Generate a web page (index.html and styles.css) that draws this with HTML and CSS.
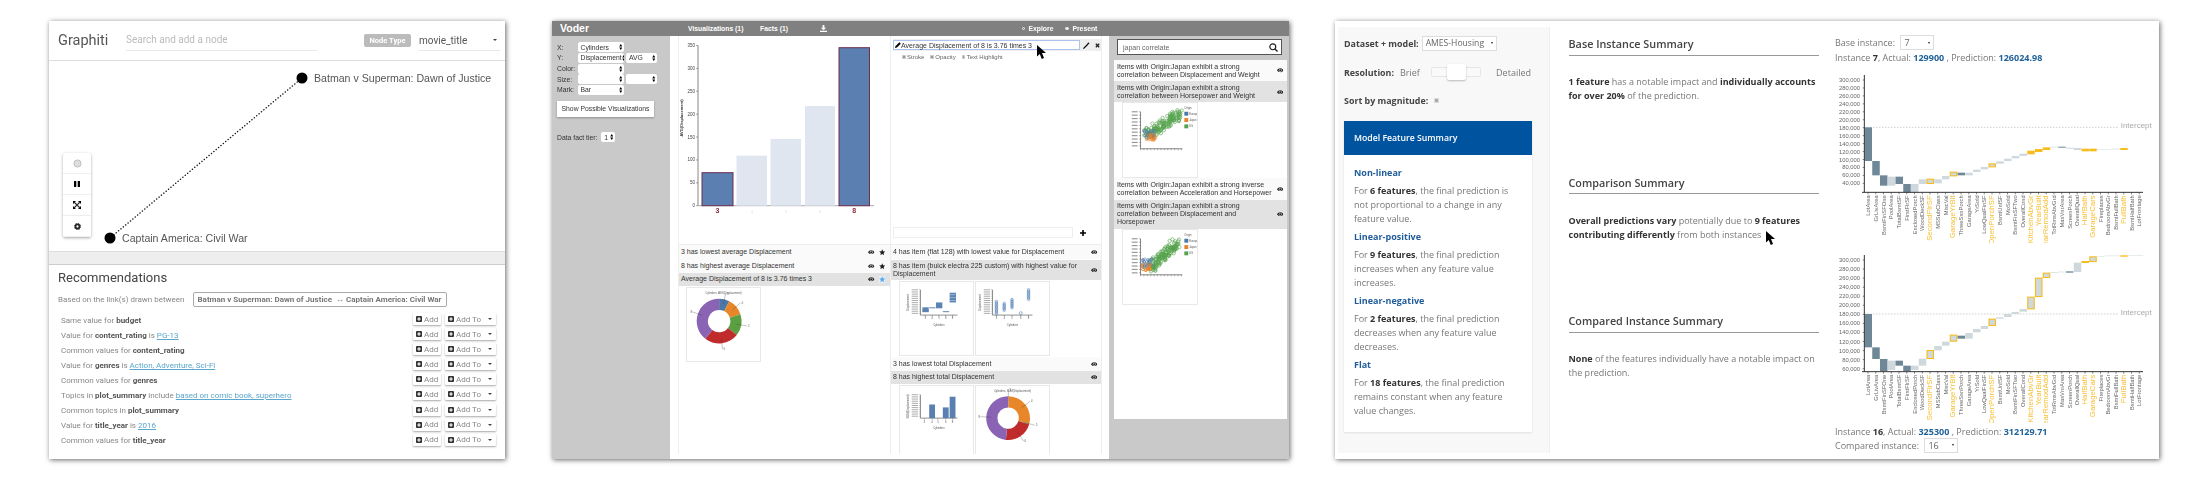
FILE: index.html
```html
<!DOCTYPE html>
<html lang="en">
<head>
    <meta charset="UTF-8">
    <title>Visual analytics systems</title>
    <link rel="stylesheet" href="styles.css">
</head>
<body>
<svg class="sprite">
    <defs>
        <symbol id="eye" viewBox="0 0 16 10"><path fill-rule="evenodd" d="M8 0C4.300 0 1.600 2.300 0 5c1.600 2.700 4.300 5 8 5s6.400-2.300 8-5c-1.600-2.700-4.300-5-8-5zm0 1.200a3.800 3.800 0 1 1 0 7.600 3.800 3.800 0 0 1 0-7.600z"/><circle cx="8" cy="5" r="2.600"/></symbol>
        <symbol id="star" viewBox="0 0 20 20"><polygon points="10,1 12.600,7.200 19.500,7.800 14.300,12.200 15.900,19 10,15.400 4.100,19 5.700,12.200 .5,7.800 7.400,7.200"/></symbol>
        <symbol id="plus-box" viewBox="0 0 10 10"><path fill-rule="evenodd" d="M1.500 0h7A1.500 1.500 0 0 1 10 1.500v7A1.500 1.500 0 0 1 8.500 10h-7A1.500 1.500 0 0 1 0 8.500v-7A1.500 1.500 0 0 1 1.500 0zM4 2v2H2v2h2v2h2V6h2V4H6V2z"/></symbol>
        <symbol id="updown" viewBox="0 0 6 10"><path d="M3 0l2.600 4H.4zM3 10L.4 6h5.200z"/></symbol>
        <symbol id="cursor" viewBox="0 0 9 14"><path d="M0 0v11.500l2.800-2.600L4.800 14l2.200-.9-2-5h4z"/></symbol>
    </defs>
</svg>

<div class="shot">

    <section class="panel graphiti">
        <header class="g-head">
            <div class="g-brand">Graphiti</div>
            <div class="g-search">Search and add a node</div>
            <div class="g-badge">Node Type</div>
            <div class="g-select">movie_title<i class="caret"></i></div>
        </header>
        <div class="g-graph">
            <svg class="g-canvas" width="456" height="193">
                <line class="g-link" x1="253" y1="18" x2="61" y2="178"/>
                <circle cx="253" cy="18" r="5.500"/>
                <circle cx="61" cy="178" r="5.500"/>
                <text x="265" y="22">Batman v Superman: Dawn of Justice</text>
                <text x="73" y="182">Captain America: Civil War</text>
            </svg>
            <div class="g-tools">
                <div class="g-tool">
                    <svg width="9" height="9" viewBox="0 0 10 10"><circle cx="5" cy="5" r="4" fill="#ddd" stroke="#bbb"/></svg>
                </div>
                <div class="g-tool">
                    <svg width="8" height="8" viewBox="0 0 8 8"><path d="M1 1h2.300v6H1zM4.700 1H7v6H4.700z"/></svg>
                </div>
                <div class="g-tool">
                    <svg width="8" height="8" viewBox="0 0 8 8"><path d="M0 0h3L0 3zM8 0v3L5 0zM0 8V5l3 3zM8 8H5l3-3z"/><path d="M1 1l6 6M7 1L1 7" stroke="#333" stroke-width="1.200"/></svg>
                </div>
                <div class="g-tool">
                    <svg width="7" height="7" viewBox="0 0 8 8"><circle cx="4" cy="4" r="2.300" fill="none" stroke="#222" stroke-width="2"/><circle cx="4" cy="4" r="3.700" fill="none" stroke="#222" stroke-width="1" stroke-dasharray="1.500 1.400"/></svg>
                </div>
            </div>
        </div>
        <div class="g-divider"></div>
        <div class="g-recs">
            <h3>Recommendations</h3>
            <div class="g-based">
                <span>Based on the link(s) drawn between</span>
                <b class="g-pair">Batman v Superman: Dawn of Justice &nbsp;↔ Captain America: Civil War</b>
            </div>
            <ul class="g-list">
                <li><span>Same value for <b>budget</b></span><span class="g-btns"><span class="g-btn add"><svg><use href="#plus-box"/></svg>Add</span><span class="g-btn addto"><svg><use href="#plus-box"/></svg>Add To<i class="caret"></i></span></span></li>
                <li><span>Value for <b>content_rating</b> is <a>PG-13</a></span><span class="g-btns"><span class="g-btn add"><svg><use href="#plus-box"/></svg>Add</span><span class="g-btn addto"><svg><use href="#plus-box"/></svg>Add To<i class="caret"></i></span></span></li>
                <li><span>Common values for <b>content_rating</b></span><span class="g-btns"><span class="g-btn add"><svg><use href="#plus-box"/></svg>Add</span><span class="g-btn addto"><svg><use href="#plus-box"/></svg>Add To<i class="caret"></i></span></span></li>
                <li><span>Value for <b>genres</b> is <a>Action, Adventure, Sci-Fi</a></span><span class="g-btns"><span class="g-btn add"><svg><use href="#plus-box"/></svg>Add</span><span class="g-btn addto"><svg><use href="#plus-box"/></svg>Add To<i class="caret"></i></span></span></li>
                <li><span>Common values for <b>genres</b></span><span class="g-btns"><span class="g-btn add"><svg><use href="#plus-box"/></svg>Add</span><span class="g-btn addto"><svg><use href="#plus-box"/></svg>Add To<i class="caret"></i></span></span></li>
                <li><span>Topics in <b>plot_summary</b> include <a>based on comic book, superhero</a></span><span class="g-btns"><span class="g-btn add"><svg><use href="#plus-box"/></svg>Add</span><span class="g-btn addto"><svg><use href="#plus-box"/></svg>Add To<i class="caret"></i></span></span></li>
                <li><span>Common topics in <b>plot_summary</b></span><span class="g-btns"><span class="g-btn add"><svg><use href="#plus-box"/></svg>Add</span><span class="g-btn addto"><svg><use href="#plus-box"/></svg>Add To<i class="caret"></i></span></span></li>
                <li><span>Value for <b>title_year</b> is <a>2016</a></span><span class="g-btns"><span class="g-btn add"><svg><use href="#plus-box"/></svg>Add</span><span class="g-btn addto"><svg><use href="#plus-box"/></svg>Add To<i class="caret"></i></span></span></li>
                <li><span>Common values for <b>title_year</b></span><span class="g-btns"><span class="g-btn add"><svg><use href="#plus-box"/></svg>Add</span><span class="g-btn addto"><svg><use href="#plus-box"/></svg>Add To<i class="caret"></i></span></span></li>
            </ul>
        </div>
    </section>

    <section class="panel voder">
        <header class="v-head">
            <b class="v-brand">Voder</b>
            <b class="v-tab tab-vis">Visualizations (1)</b>
            <b class="v-tab tab-facts">Facts (1)</b>
            <svg class="v-save" width="7" height="7" viewBox="0 0 8 8"><path d="M3 0h2v3h2L4 6 1 3h2zM0 6.500h8V8H0z" fill="#fff"/></svg>
            <i class="v-radio"></i><b class="v-tab">Explore</b>
            <i class="v-radio on"></i><b class="v-tab">Present</b>
        </header>
        <div class="v-body">
            <aside class="v-side">
                <div class="v-field"><label>X:</label><div class="v-pick wide">Cylinders<svg><use href="#updown"/></svg></div></div>
                <div class="v-field"><label>Y:</label><div class="v-pick wide">Displacement<svg><use href="#updown"/></svg></div><div class="v-pick narrow">AVG<svg><use href="#updown"/></svg></div></div>
                <div class="v-field"><label>Color:</label><div class="v-pick wide"><svg><use href="#updown"/></svg></div></div>
                <div class="v-field"><label>Size:</label><div class="v-pick wide"><svg><use href="#updown"/></svg></div><div class="v-pick narrow"><svg><use href="#updown"/></svg></div></div>
                <div class="v-field"><label>Mark:</label><div class="v-pick wide">Bar<svg><use href="#updown"/></svg></div></div>
                <div class="v-show">Show Possible Visualizations</div>
                <div class="v-tier">Data fact tier: <div class="v-pick tiny">1<svg><use href="#updown"/></svg></div></div>
            </aside>

            <div class="v-stage">
                <div class="v-chart">
                    <svg id="mainBars" width="211" height="209"></svg>
                </div>
                <div class="v-editor">
                    <div class="v-edit">
                        <div class="v-input">
                            <svg width="6" height="6" viewBox="0 0 8 8"><path d="M0 8l.6-2.500L5.800.3l1.900 1.900L2.500 7.400z"/></svg>Average Displacement of 8 is 3.76 times 3
                        </div>
                        <svg class="v-wand" width="7" height="7" viewBox="0 0 8 8"><path d="M0 7l5-5 1 1-5 5zM6 0l.5 1L8 1.500 6.500 2 6 3l-.5-1L4.500 1.500 5.500 1z"/></svg>
                        <svg class="v-close" width="5" height="5" viewBox="0 0 6 6"><path d="M1 1l4 4M5 1L1 5" stroke="#222" stroke-width="1.600"/></svg>
                    </div>
                    <div class="v-checks">
                        <span><i class="v-check"></i>Stroke</span>
                        <span><i class="v-check"></i>Opacity</span>
                        <span><i class="v-check"></i>Text Highlight</span>
                    </div>
                    <div class="v-note">
                        <div class="v-note-input"></div>
                        <svg width="6" height="6" viewBox="0 0 6 6"><path d="M2.200 0h1.600v2.200H6v1.600H3.800V6H2.200V3.800H0V2.200h2.200z"/></svg>
                    </div>
                </div>

                <div class="v-facts">
                    <div class="v-fact h14"><span>3 has lowest average Displacement</span><svg class="eye"><use href="#eye"/></svg><svg class="star"><use href="#star"/></svg></div>
                    <div class="v-fact h14"><span>8 has highest average Displacement</span><svg class="eye"><use href="#eye"/></svg><svg class="star"><use href="#star"/></svg></div>
                    <div class="v-fact h13 sel"><span>Average Displacement of 8 is 3.76 times 3</span><svg class="eye"><use href="#eye"/></svg><svg class="star blue"><use href="#star"/></svg></div>
                    <div class="v-thumbs first">
                        <svg class="v-thumb" id="donutAvg" viewBox="0 0 75 75"></svg>
                    </div>
                </div>

                <div class="v-facts right">
                    <div class="v-fact h14"><span>4 has item (flat 128) with lowest value for Displacement</span><svg class="eye"><use href="#eye"/></svg></div>
                    <div class="v-fact tall sel"><span>8 has item (buick electra 225 custom) with highest value for<br>Displacement</span><svg class="eye"><use href="#eye"/></svg></div>
                    <div class="v-thumbs">
                        <svg class="v-thumb" id="strips" viewBox="0 0 75 75"></svg>
                        <svg class="v-thumb" id="dots" viewBox="0 0 75 75"></svg>
                    </div>
                    <div class="v-fact h14"><span>3 has lowest total Displacement</span><svg class="eye"><use href="#eye"/></svg></div>
                    <div class="v-fact h13 sel"><span>8 has highest total Displacement</span><svg class="eye"><use href="#eye"/></svg></div>
                    <div class="v-thumbs">
                        <svg class="v-thumb" id="sumBars" viewBox="0 0 75 75"></svg>
                        <svg class="v-thumb" id="donutSum" viewBox="0 0 75 75"></svg>
                    </div>
                </div>
            </div>

            <aside class="v-search">
                <div class="v-query">japan correlate
                    <svg width="9" height="9" viewBox="0 0 10 10"><circle cx="4.200" cy="4.200" r="3.300" fill="none" stroke="#222" stroke-width="1.300"/><path d="M6.700 6.700L9.500 9.500" stroke="#222" stroke-width="1.600"/></svg>
                </div>
                <div class="v-results">
                    <div class="v-fact res"><span>Items with Origin:Japan exhibit a strong<br>correlation between Displacement and Weight</span><svg class="eye"><use href="#eye"/></svg></div>
                    <div class="v-fact res sel"><span>Items with Origin:Japan exhibit a strong<br>correlation between Horsepower and Weight</span><svg class="eye"><use href="#eye"/></svg></div>
                    <svg class="v-thumb res-thumb" id="scatterHp" viewBox="0 0 76 76"></svg>
                    <div class="v-fact res"><span>Items with Origin:Japan exhibit a strong inverse<br>correlation between Acceleration and Horsepower</span><svg class="eye"><use href="#eye"/></svg></div>
                    <div class="v-fact res sel"><span>Items with Origin:Japan exhibit a strong<br>correlation between Displacement and<br>Horsepower</span><svg class="eye"><use href="#eye"/></svg></div>
                    <svg class="v-thumb res-thumb" id="scatterDisp" viewBox="0 0 76 76"></svg>
                </div>
            </aside>
        </div>
        <svg class="cursor v-cursor"><use href="#cursor"/></svg>
    </section>

    <section class="panel ames">
        <aside class="a-side">
            <div class="a-line first">
                <b>Dataset + model:</b>
                <div class="a-select data">AMES-Housing<i class="a-arrow"></i></div>
            </div>
            <div class="a-line res">
                <b>Resolution:</b><span class="a-brief">Brief</span>
                <div class="a-slider"><div class="a-thumb"></div></div>
                <span class="a-detail">Detailed</span>
            </div>
            <div class="a-line sort">
                <b>Sort by magnitude:</b><i class="a-check"></i>
            </div>
            <div class="a-card">
                <h4>Model Feature Summary</h4>
                <div class="a-card-body">
                    <h5>Non-linear</h5>
                    <p>For <b>6 features</b>, the final prediction is not proportional to a change in any feature value.</p>
                    <h5>Linear-positive</h5>
                    <p>For <b>9 features</b>, the final prediction increases when any feature value increases.</p>
                    <h5>Linear-negative</h5>
                    <p>For <b>2 features</b>, the final prediction decreases when any feature value decreases.</p>
                    <h5>Flat</h5>
                    <p>For <b>18 features</b>, the final prediction remains constant when any feature value changes.</p>
                </div>
            </div>
        </aside>

        <div class="a-mid">
            <div class="a-sum">
                <h3>Base Instance Summary</h3>
                <p><b>1 feature</b> has a notable impact and <b>individually accounts for over 20%</b> of the prediction.</p>
            </div>
            <div class="a-sum">
                <h3>Comparison Summary</h3>
                <p><b>Overall predictions vary</b> potentially due to <b>9 features contributing differently</b> from both instances</p>
            </div>
            <div class="a-sum">
                <h3>Compared Instance Summary</h3>
                <p><b>None</b> of the features individually have a notable impact on the prediction.</p>
            </div>
        </div>

        <div class="a-charts">
            <div class="a-row pick-top">Base instance: <div class="a-select num">7<i class="a-arrow"></i></div></div>
            <div class="a-row">Instance <b>7</b>, Actual: <em>129900</em> , Prediction: <em>126024.98</em></div>
            <svg id="fallBase" class="a-fall" width="324" height="177"></svg>
            <svg id="fallComp" class="a-fall second" width="324" height="173"></svg>
            <div class="a-row">Instance <b>16</b>, Actual: <em>325300</em> , Prediction: <em>312129.71</em></div>
            <div class="a-row">Compared instance: <div class="a-select num">16<i class="a-arrow"></i></div></div>
        </div>
        <svg class="cursor a-cursor"><use href="#cursor"/></svg>
    </section>

</div>
<script src="charts.js"></script>
</body>
</html>
```
FILE: styles.css
```css
* { box-sizing: border-box; }
html, body { margin: 0; height: 480px; overflow: hidden; background: #fff; }
.sprite { display: none; }
.shot { display: flex; padding-top: 21px; filter: blur(.45px); }
.panel { position: relative; height: 438px; background: #fff; box-shadow: 1px 1px 5px rgba(0,0,0,.6); overflow: hidden; }
.cursor { position: absolute; width: 9px; height: 14px; }
i { display: block; }

/* graphiti */
.graphiti { width: 456px; margin-left: 49px; font-family: Roboto, sans-serif; color: #777; }
.g-head { display: flex; align-items: center; height: 40px; padding: 0 5px 0 9px; border-bottom: 1px solid #ddd; }
.g-brand { width: 68px; font-size: 14.500px; color: #555; }
.g-search { width: 191px; height: 21px; line-height: 20px; font-size: 10px; color: #bbb; border-bottom: 1px solid #e8e8e8; }
.g-badge { width: 47px; margin-left: 47px; line-height: 13px; text-align: center; font-size: 7.500px; font-weight: 700; color: #fff; background: #bbb; border-radius: 2px; }
.g-select { display: flex; align-items: center; justify-content: space-between; width: 81px; height: 21px; margin-left: 8px; padding-right: 3px; font-size: 10px; color: #555; border-bottom: 1px solid #e8e8e8; }
.caret { width: 0; height: 0; border: 2px solid transparent; border-top: 2.500px solid #444; border-bottom: 0; }
.g-graph { position: relative; height: 192px; border-bottom: 1px solid #ddd; }
.g-canvas { display: block; margin-top: -1px; }
.g-canvas text { font: 10.600px "Liberation Sans", sans-serif; fill: #555; }
.g-link { stroke: #111; stroke-width: 1.400; stroke-dasharray: .1 3; stroke-linecap: round; }
.g-tools { position: absolute; left: 14px; top: 93px; width: 28px; background: #fff; box-shadow: 0 1px 3px rgba(0,0,0,.35); border-radius: 2px; }
.g-tool { display: flex; align-items: center; justify-content: center; height: 21px; border-bottom: 1px solid #eee; }
.g-divider { height: 13px; background: #eee; border-bottom: 1px solid #ccc; }
.g-recs { padding: 0 9px; font-size: 8px; }
.g-recs h3 { margin: 0; font-size: 13px; font-weight: 400; line-height: 26px; color: #444; }
.g-based { display: flex; align-items: center; height: 15px; margin-top: 1px; color: #888; }
.g-pair { width: 254px; height: 15px; margin-left: 8px; line-height: 13px; text-align: center; color: #777; border: 1px solid #aaa; border-radius: 2px; }
.g-list { margin: 5.500px 0 0; padding: 0 0 0 3px; list-style: none; }
.g-list li { display: flex; justify-content: space-between; align-items: center; height: 15.080px; color: #888; }
.g-list b { color: #555; }
.g-list a { color: #5aa6cc; text-decoration: underline; }
.g-btns { display: flex; gap: 4px; margin-bottom: 2px; }
.g-btn { display: flex; align-items: center; height: 12px; padding-left: 3px; background: #fff; border-radius: 1px; box-shadow: 0 1px 2px rgba(0,0,0,.35); }
.g-btn svg { width: 6px; height: 6px; margin-right: 2px; fill: #333; }
.g-btn.add { width: 28px; }
.g-btn.addto { width: 51px; }
.g-btn .caret { margin-left: 7px; }

/* voder */
.voder { width: 737px; margin-left: 47px; font-family: "Liberation Sans", sans-serif; color: #333; }
.v-head { display: flex; align-items: center; height: 15px; padding-left: 8px; color: #fff; background: #808080; }
.v-brand { width: 128px; font-size: 10.500px; margin-top: -2px; }
.v-tab { font-size: 6.800px; }
.tab-vis { width: 72px; }
.tab-facts { width: 60px; }
.v-save { margin-right: 194.500px; }
.v-radio { width: 3.500px; height: 3.500px; margin-right: 3.500px; border: 1px solid #eee; border-radius: 50%; }
.v-radio.on { margin-left: 12px; background: #eee; }
.v-body { display: flex; height: 423px; }
.v-side { width: 118px; padding: 6px 5px; font-size: 6.800px; background: #c9c9c9; }
.v-field { display: flex; align-items: center; height: 10.670px; }
.v-field label { width: 20.500px; }
.v-pick { display: flex; align-items: center; height: 10px; padding: 0 2px 0 3px; background: #fff; border-radius: 2px; white-space: nowrap; overflow: hidden; }
.v-pick svg { flex: none; width: 3.500px; height: 6px; margin-left: auto; background: #fff; }
.v-pick.wide { width: 46.500px; }
.v-pick.narrow { width: 31px; margin-left: 2px; }
.v-pick.tiny { width: 14px; margin-left: 2px; }
.v-show { width: 97px; height: 16px; margin-top: 5.500px; line-height: 16px; text-align: center; background: #fff; box-shadow: 0 1px 2px rgba(0,0,0,.3); }
.v-tier { display: flex; align-items: center; height: 10px; margin-top: 15.500px; white-space: pre; }
.v-stage { display: grid; grid-template-columns: 212px 212px; grid-template-rows: 209px 209px; width: 439px; height: 418px; padding-left: 8px; overflow: hidden; font-size: 7px; }
.v-chart, .v-editor { border-bottom: 1px solid #eee; }
.v-chart { border-left: 1px solid #eee; }
.v-chart svg { display: block; font: 4.500px "Liberation Sans", sans-serif; }
.v-editor { display: flex; flex-direction: column; padding: 3px 0 6px 2px; border-left: 1px solid #eee; border-right: 1px solid #eee; }
.v-edit { display: flex; align-items: center; height: 12px; background: #eee; }
.v-input { display: flex; align-items: center; width: 187px; height: 10px; padding-left: 1px; background: #fff; border: 1px solid #a9c4ee; white-space: nowrap; }
.v-wand { margin-left: 2.500px; }
.v-close { margin-left: 5px; }
.v-checks { display: flex; gap: 6px; margin-top: 3px; padding-left: 9px; font-size: 6px; color: #666; }
.v-checks span { display: flex; align-items: center; }
.v-check { width: 3.500px; height: 3.500px; margin-right: 1.500px; background: #999; border: .5px solid #ccc; }
.v-note { display: flex; align-items: center; margin-top: auto; }
.v-note-input { width: 180px; height: 11px; margin-right: 7px; border: 1px solid #eee; }
.v-facts { border-left: 1px solid #eee; overflow: hidden; }
.v-facts.right { border-right: 1px solid #eee; }
.v-fact { display: flex; align-items: center; padding: 0 3px 0 2px; background: #fafafa; line-height: 8.100px; }
.v-fact span { flex: 1; white-space: nowrap; }
.v-fact.h14 { height: 14px; }
.v-fact.h13 { height: 13px; }
.v-fact.tall { height: 20.500px; margin-top: .5px; }
.v-fact.sel { background: #e2e2e2; }
.v-facts.right .v-fact { padding-right: 3px; }
.eye { flex: none; width: 6.500px; height: 4.500px; margin-right: 1px; fill: #222; }
.star { flex: none; width: 6.500px; height: 6.500px; margin: 0 2px 0 3px; fill: #222; }
.star.blue { fill: #5da9ea; background: #e3eef8; }
.v-thumbs { display: flex; gap: 1px; padding: 1px 0 1px 8px; background: #fff; }
.v-thumbs.first { padding-left: 7px; }
.v-thumb { display: block; flex: none; width: 75px; height: 75px; background: #fff; border: 1px solid #e8e8e8; }
.v-thumb text { font: 2.800px "Liberation Sans", sans-serif; fill: #555; }
.v-search { width: 180px; padding: 3px 2px 0 5px; font-size: 7px; background: #c9c9c9; }
.v-query { display: flex; align-items: center; justify-content: space-between; width: 165px; height: 16px; margin-left: 3px; padding: 0 3px 0 5px; color: #666; background: #fff; border: 1px solid #555; }
.v-results { height: 359px; margin-top: 5px; background: #fff; }
.v-fact.res { padding: 2.500px 3px 2.500px 3px; }
.res-thumb { width: 76px; height: 76px; margin-left: 8px; }
.v-cursor { left: 485px; top: 24px; }

/* ames */
.ames { display: flex; width: 824px; margin-left: 46px; padding: 6px 0 6px 3px; font-family: "Open Sans", sans-serif; font-size: 9px; color: #777; }
.ames b { font-weight: 700; color: #333; }
.a-side { flex: none; width: 212px; padding: 0 18px 0 6px; background: #f8f8f8; border-right: 1px solid #eee; }
.a-line { display: flex; align-items: center; white-space: nowrap; }
.a-line b { color: #444; font-size: 8.900px; }
.a-line.first { height: 16px; margin-top: 8px; }
.a-line.res { height: 16px; margin-top: 13px; }
.a-line.sort { height: 12px; margin-top: 14px; }
.a-select { display: flex; align-items: center; background: #fff; border: 1px solid #ddd; color: #666; }
.a-arrow { width: 0; height: 0; margin-left: auto; border: 1.500px solid transparent; border-top: 2.500px solid #222; border-bottom: 0; }
.a-select.data { width: 75px; height: 15px; margin-left: 3px; padding: 0 3px; font-size: 8.600px; }
.a-select.num { width: 34px; height: 15px; margin-left: 3px; padding: 0 3px; }
.a-brief { margin-left: 6px; width: 33px; }
.a-slider { display: flex; align-items: center; justify-content: center; position: relative; width: 53px; height: 10px; background: #fafafa; border: 1px solid #e6e6e6; border-radius: 2px; }
.a-thumb { width: 19px; height: 16px; flex: none; background: #fff; border-radius: 2px; box-shadow: 0 1px 2px rgba(0,0,0,.25); }
.a-detail { margin-left: 15px; }
.a-check { width: 5px; height: 5px; margin-left: 6px; background: #aaa; border: 1px solid #ddd; }
.a-card { width: 188px; height: 311px; margin-top: 15px; background: #fff; box-shadow: 0 1px 2px rgba(0,0,0,.1); }
.a-card h4 { margin: 0; height: 34px; padding-left: 10px; line-height: 34px; font-size: 8.700px; font-weight: 600; color: #fff; background: #00549f; }
.a-card-body { padding: 11px 8px 0 10px; }
.a-card h5 { margin: 0; height: 14px; line-height: 14px; font-size: 9px; font-weight: 700; color: #1f5c99; }
.a-card p { margin: 4px 0 4px; line-height: 14px; }
.a-mid { flex: none; width: 285px; padding-left: 18.500px; }
.a-sum { height: 138.700px; padding-top: 7px; width: 250px; }
.a-sum h3 { margin: 0; height: 21.500px; line-height: 19px; font-size: 10.800px; font-weight: 600; color: #444; border-bottom: 1px solid #999; }
.a-sum p { margin: 19.500px 0 0; line-height: 14px; }
.a-charts { flex: none; width: 324px; }
.a-row { display: flex; align-items: center; height: 14px; white-space: pre; color: #777; }
.a-row.pick-top { height: 15px; margin-top: 8px; }
.a-row em { font-style: normal; font-weight: 700; color: #1f6299; }
.a-fall { display: block; margin-top: 2px; font-family: "Liberation Sans", sans-serif; }
.a-fall.second { margin-top: 7px; margin-bottom: 1px; }
.a-cursor { left: 431px; top: 210px; }
```
FILE: charts.js
```js
const NS = 'http://www.w3.org/2000/svg';

function add(parent, tag, attrs, text) {
    const node = document.createElementNS(NS, tag);
    for (const k in attrs) node.setAttribute(k, attrs[k]);
    if (text !== undefined) node.textContent = text;
    parent.appendChild(node);
    return node;
}

// small seeded random so the scatter plots come out the same every time
let seed = 7;
function rnd() {
    seed = (seed * 16807) % 2147483647;
    return seed / 2147483647;
}

function drawMainBars() {
    const svg = document.getElementById('mainBars');
    // page x minus 678, page y minus 36
    const axisX = 19, base = 169.700, top = 9.500;
    for (let v = 0; v <= 350; v += 50) {
        const y = base - v / 350 * (base - top);
        add(svg, 'line', { x1: axisX - 2, x2: axisX, y1: y, y2: y, stroke: '#555', 'stroke-width': .5 });
        add(svg, 'text', { x: axisX - 3, y: y + 1.500, 'text-anchor': 'end', fill: '#444' }, v);
    }
    add(svg, 'line', { x1: axisX, x2: axisX, y1: top, y2: base, stroke: '#555', 'stroke-width': .7 });
    add(svg, 'line', { x1: axisX, x2: 195, y1: base, y2: base, stroke: '#aaa', 'stroke-width': 1 });
    const bars = [
        { x: 23, w: 31, top: 136.700, label: '3', on: true },
        { x: 57.500, w: 30.500, top: 119.700, label: '4' },
        { x: 91.500, w: 30.500, top: 103, label: '5' },
        { x: 126, w: 30, top: 70, label: '6' },
        { x: 160, w: 30.500, top: 11.700, label: '8', on: true }
    ];
    bars.forEach(b => {
        const attrs = { x: b.x, y: b.top, width: b.w, height: base - b.top };
        if (b.on) {
            attrs.fill = '#5b7fb0';
            attrs.stroke = '#6d2f50';
            attrs['stroke-width'] = 1;
        } else {
            attrs.fill = '#dfe6ef';
        }
        add(svg, 'rect', attrs);
        add(svg, 'text', {
            x: b.x + b.w / 2, y: base + 7, 'text-anchor': 'middle',
            fill: b.on ? '#8c2a3a' : '#ddd', 'font-weight': b.on ? 700 : 400, 'font-size': b.on ? 7 : 4
        }, b.label);
    });
    add(svg, 'text', {
        transform: 'translate(4,82) rotate(-90)', 'text-anchor': 'middle', 'font-weight': 700, 'font-size': 4, fill: '#333'
    }, 'AVG(Displacement)');
}

function polar(cx, cy, r, deg) {
    const a = (deg - 90) * Math.PI / 180;
    return [cx + r * Math.cos(a), cy + r * Math.sin(a)];
}

function drawDonut(id, title, cx, cy, r, inner, parts) {
    const svg = document.getElementById(id);
    add(svg, 'text', { x: 37.500, y: 6, 'text-anchor': 'middle', 'font-weight': 700 }, title);
    parts.forEach(p => {
        const [x1, y1] = polar(cx, cy, r, p.from);
        const [x2, y2] = polar(cx, cy, r, p.to);
        const [x3, y3] = polar(cx, cy, inner, p.to);
        const [x4, y4] = polar(cx, cy, inner, p.from);
        const big = p.to - p.from > 180 ? 1 : 0;
        add(svg, 'path', {
            d: `M${x1} ${y1}A${r} ${r} 0 ${big} 1 ${x2} ${y2}L${x3} ${y3}A${inner} ${inner} 0 ${big} 0 ${x4} ${y4}Z`,
            fill: p.color
        });
        const mid = (p.from + p.to) / 2;
        const [a, b] = polar(cx, cy, r - 5, mid);
        const [c, d] = polar(cx, cy, r + 6, mid);
        add(svg, 'line', { x1: a, y1: b, x2: c, y2: d, stroke: '#333', 'stroke-width': .3 });
        add(svg, 'text', { x: c + (c < cx ? -2 : 1), y: d + 1 }, p.label);
    });
}

function axes(svg, x, top, base, right, label) {
    add(svg, 'line', { x1: x, x2: x, y1: top, y2: base, stroke: '#444', 'stroke-width': .6 });
    add(svg, 'line', { x1: x, x2: right, y1: base, y2: base, stroke: '#444', 'stroke-width': .6 });
    for (let y = top; y <= base; y += 2.200) {
        add(svg, 'line', { x1: x - 1.500, x2: x, y1: y, y2: y, stroke: '#444', 'stroke-width': .3 });
        add(svg, 'rect', { x: x - 9, y: y - .5, width: 6.500, height: 1, fill: '#aaa' });
    }
    add(svg, 'text', { x: (x + right) / 2, y: base + 11, 'text-anchor': 'middle', 'font-weight': 700 }, 'Cylinders');
    add(svg, 'text', {
        transform: `translate(${x - 12},${(top + base) / 2}) rotate(-90)`, 'text-anchor': 'middle', 'font-weight': 700
    }, label);
}

function xTicks(svg, xs, base) {
    xs.forEach((x, i) => {
        add(svg, 'line', { x1: x, x2: x, y1: base, y2: base + 1.500, stroke: '#444', 'stroke-width': .4 });
        add(svg, 'text', { x: x, y: base + 4.500, 'text-anchor': 'middle' }, [3, 4, 5, 6, 8][i]);
    });
}

function drawStrips() {
    const svg = document.getElementById('strips');
    axes(svg, 21, 8, 34, 59, 'Displacement');
    xTicks(svg, [26, 33, 40, 47, 54], 34);
    [[26, 26, 5], [26, 29, 1], [33, 26, 1], [40, 21, 6], [47, 30, 1], [54, 11, 10]].forEach(s => {
        add(svg, 'rect', { x: s[0] - 3, y: s[1], width: 6.500, height: s[2], fill: '#5b84b4' });
    });
    [13, 16, 19].forEach(y => add(svg, 'line', { x1: 51, x2: 57, y1: y, y2: y, stroke: '#fff', 'stroke-width': .4 }));
}

function drawDots() {
    const svg = document.getElementById('dots');
    axes(svg, 17, 8, 34, 58, 'Displacement');
    xTicks(svg, [21, 29, 37, 46, 54], 34);
    const spread = [[21, 20, 33], [29, 22, 29], [37, 18, 27], [54, 8, 18]];
    spread.forEach(s => {
        for (let y = s[1]; y <= s[2]; y += 1.400) {
            add(svg, 'circle', { cx: s[0], cy: y, r: 1.300, fill: 'none', stroke: '#4f7fb3', 'stroke-width': .6 });
        }
    });
    add(svg, 'circle', { cx: 46, cy: 32, r: 1.500, fill: 'none', stroke: '#4f7fb3', 'stroke-width': .6 });
}

function drawSumBars() {
    const svg = document.getElementById('sumBars');
    axes(svg, 21, 9, 33, 59, 'SUM(Displacement)');
    xTicks(svg, [25, 33, 39, 47, 54], 33);
    [[30, 19], [44, 22], [51, 11]].forEach(b => {
        add(svg, 'rect', { x: b[0], y: b[1], width: 6, height: 33 - b[1], fill: '#5b7fb0' });
    });
}

function drawScatter(id, axisBase, a, b, c) {
    const svg = document.getElementById(id);
    add(svg, 'line', { x1: 18, x2: 18, y1: 9, y2: axisBase, stroke: '#333', 'stroke-width': .6 });
    add(svg, 'line', { x1: 18, x2: 61, y1: axisBase, y2: axisBase, stroke: '#333', 'stroke-width': .6 });
    for (let y = 9; y <= axisBase; y += 3.500) {
        add(svg, 'line', { x1: 16.500, x2: 18, y1: y, y2: y, stroke: '#333', 'stroke-width': .4 });
        add(svg, 'rect', { x: 9, y: y - .6, width: 6, height: 1.200, fill: '#999' });
    }
    for (let x = 18; x <= 61; x += 3.500) {
        add(svg, 'line', { x1: x, x2: x, y1: axisBase, y2: axisBase + 1.500, stroke: '#333', 'stroke-width': .4 });
    }
    for (let i = 0; i < 140; i++) {
        const t = rnd();
        add(svg, 'circle', {
            cx: a[0] + t * (a[2] - a[0]) + (rnd() - .5) * 9, cy: a[1] + t * (a[3] - a[1]) + (rnd() - .5) * 10,
            r: 1.700, fill: 'none', stroke: '#54a24b', 'stroke-width': .6
        });
    }
    for (let i = 0; i < 26; i++) {
        add(svg, 'circle', { cx: b[0] + (rnd() - .5) * 11, cy: b[1] + (rnd() - .5) * 9, r: 1.300, fill: 'none', stroke: '#4c78a8', 'stroke-width': .5 });
        add(svg, 'circle', { cx: c[0] + (rnd() - .5) * 10, cy: c[1] + (rnd() - .5) * 7, r: 1.300, fill: 'none', stroke: '#e8832b', 'stroke-width': .6 });
    }
    add(svg, 'text', { x: 63, y: 6, 'font-weight': 700 }, 'Origin');
    [['#4c78a8', 'Europe'], ['#e8832b', 'Japan'], ['#54a24b', 'US']].forEach((l, i) => {
        add(svg, 'rect', { x: 63, y: 9 + i * 6.500, width: 4, height: 4, fill: l[0] });
        add(svg, 'text', { x: 68, y: 12 + i * 6.500 }, l[1]);
    });
}

const FEATURES = [
    'LotArea', 'GrLivArea', 'BsmtFinSFOne', 'PoolArea', 'TotalBsmtSF', 'FirstFlrSF', 'EnclosedPorch', 'WoodDeckSF',
    'SecondFlrSF', 'MSSubClass', 'MiscVal', 'GarageYrBlt', 'ThreeSsnPorch', 'GarageArea', 'YrSold', 'LowQualFinSF',
    'OpenPorchSF', 'BsmtUnfSF', 'MoSold', 'BsmtFinSFTwo', 'OverallCond', 'KitchenAbvGr', 'YearBuilt', 'YearRemodAdd',
    'TotRmsAbvGrd', 'MasVnrArea', 'ScreenPorch', 'OverallQual', 'HalfBath', 'GarageCars', 'Fireplaces', 'BedroomAbvGr',
    'BsmtFullBath', 'FullBath', 'BsmtHalfBath', 'LotFrontage'
];
const MARKED = [8, 11, 16, 21, 22, 23, 28, 29, 33];

// bars: [index, top, bottom, kind], all measured in the same units as the spec below
function drawFall(id, spec) {
    const svg = document.getElementById(id);
    const X = z => z / 3 - 15;
    const Y = z => z / 3 - spec.shift;
    const axisTop = Y(spec.axisTop), axisBase = Y(spec.axisBase);
    for (let i = 0; i < spec.ticks; i++) {
        const z = spec.firstTick + i * spec.tickStep;
        const v = (300 - i * 20) + ',000';
        add(svg, 'line', { x1: X(128), x2: X(133), y1: Y(z), y2: Y(z), stroke: '#333', 'stroke-width': .6 });
        add(svg, 'text', { x: X(120), y: Y(z) + 2, 'text-anchor': 'end', 'font-size': 5.800, fill: '#666' }, v);
    }
    add(svg, 'line', {
        x1: X(133), x2: X(895), y1: Y(spec.intercept), y2: Y(spec.intercept),
        stroke: '#999', 'stroke-width': .7, 'stroke-dasharray': '1 2'
    });
    add(svg, 'text', { x: X(902), y: Y(spec.intercept) + 1, 'font-size': 8, fill: '#aaa' }, 'Intercept');
    spec.bars.forEach(b => {
        const x = X(144 + b[0] * 23.250) - 3.500;
        const y = Y(b[1]);
        const h = Math.max((b[2] - b[1]) / 3, .5);
        if (b[3] === 'y') {
            add(svg, 'rect', { x: x + .5, y: y + .5, width: 6.500, height: Math.max(h - 1, .5), fill: '#cfd8dc', stroke: '#f6bd1f', 'stroke-width': 1.100 });
        } else if (b[3] === 's') {
            add(svg, 'rect', { x: x, y: y, width: 7.500, height: h, fill: '#f6bd1f' });
        } else {
            add(svg, 'rect', { x: x, y: y, width: 7.500, height: h, fill: b[3] === 'd' ? '#6e8898' : '#cfd8dc' });
        }
    });
    add(svg, 'line', { x1: X(133), x2: X(133), y1: axisTop, y2: axisBase, stroke: '#333', 'stroke-width': 1 });
    add(svg, 'line', { x1: X(126), x2: X(969), y1: axisBase, y2: axisBase, stroke: '#333', 'stroke-width': 1 });
    FEATURES.forEach((name, i) => {
        const x = X(144 + i * 23.250);
        const marked = MARKED.includes(i);
        add(svg, 'line', { x1: x, x2: x, y1: axisBase, y2: axisBase + 2, stroke: '#333', 'stroke-width': .6 });
        add(svg, 'text', {
            transform: `translate(${x + 2},${axisBase + 3}) rotate(-90)`, 'text-anchor': 'end',
            'font-size': marked ? 7.800 : 5.800, fill: marked ? '#f7c034' : '#666'
        }, name);
    });
}

drawMainBars();
drawDonut('donutAvg', 'Cylinders, AVG(Displacement)', 33, 34, 23, 11.500, [
    { from: 0, to: 27, color: '#4c78a8', label: '3' },
    { from: 27, to: 72, color: '#e8862a', label: '4' },
    { from: 72, to: 128, color: '#5a9f41', label: '5' },
    { from: 128, to: 218, color: '#c02c2c', label: '6' },
    { from: 218, to: 360, color: '#8a63b5', label: '8' }
]);
drawDonut('donutSum', 'Cylinders, SUM(Displacement)', 33, 33, 22.500, 11, [
    { from: 0, to: 1, color: '#4c78a8', label: '3' },
    { from: 1, to: 104, color: '#e8862a', label: '4' },
    { from: 104, to: 106, color: '#5a9f41', label: '5' },
    { from: 106, to: 186, color: '#c02c2c', label: '6' },
    { from: 186, to: 360, color: '#8a63b5', label: '8' }
]);
drawStrips();
drawDots();
drawSumBars();
drawScatter('scatterHp', 47, [24, 33, 58, 11], [27, 32], [29, 35]);
drawScatter('scatterDisp', 46, [30, 38, 56, 12], [25, 34], [24, 38]);

drawFall('fallBase', {
    shift: 46, axisTop: 165, axisBase: 517, firstTick: 180, tickStep: 23.850, ticks: 14, intercept: 322,
    bars: [
        [0, 322, 423, 'd'], [1, 423, 466, 'd'], [2, 466, 497, 'd'], [3, 470, 497, 'l'], [4, 470, 492, 'd'],
        [5, 492, 517, 'd'], [6, 492, 517, 'l'], [7, 478, 492, 'l'], [8, 476, 492, 'y'], [9, 478, 490, 'l'],
        [10, 468, 478, 'l'], [11, 455, 469, 'y'], [12, 458, 466, 'd'], [13, 458, 466, 'l'], [14, 449, 456, 'l'],
        [15, 441, 448, 'l'], [16, 430, 442, 'y'], [17, 424, 431, 'l'], [18, 416, 423, 'l'], [19, 408, 415, 'l'],
        [20, 401, 408, 'l'], [21, 392, 403, 's'], [22, 387, 396, 's'], [23, 382, 390, 's'], [24, 380, 382, 'l'],
        [25, 380, 383, 'd'], [26, 383, 386, 'l'], [27, 386, 388, 'd'], [28, 386, 394, 's'], [29, 386, 394, 's'],
        [30, 387, 388, 'l'], [31, 387, 388, 'l'], [32, 386, 388, 'l'], [33, 384, 390, 's']
    ]
});
drawFall('fallComp', {
    shift: 10, axisTop: 45, axisBase: 395, firstTick: 60, tickStep: 27.170, ticks: 13, intercept: 222,
    bars: [
        [0, 222, 322, 'd'], [1, 322, 357, 'd'], [2, 357, 393, 'd'], [3, 362, 390, 'l'], [4, 362, 377, 'd'],
        [5, 377, 393, 'd'], [6, 377, 390, 'l'], [7, 356, 377, 'l'], [8, 330, 357, 'y'], [9, 318, 331, 'l'],
        [10, 305, 317, 'l'], [11, 284, 305, 'y'], [12, 287, 296, 'd'], [13, 279, 296, 'l'], [14, 267, 277, 'l'],
        [15, 258, 267, 'l'], [16, 236, 258, 'y'], [17, 232, 236, 'l'], [18, 222, 231, 'l'], [19, 216, 222, 'l'],
        [20, 207, 215, 'l'], [21, 170, 208, 'y'], [22, 113, 171, 'y'], [23, 98, 114, 'y'], [24, 96, 98, 'l'],
        [25, 95, 97, 'l'], [26, 94, 98, 'd'], [27, 68, 96, 'l'], [28, 63, 69, 's'], [29, 49, 66, 'y'],
        [30, 48, 49, 'l'], [31, 47, 48, 'l'], [32, 47, 48, 'l'], [33, 46, 50, 's'], [34, 45, 46, 'l'], [35, 45, 46, 'l']
    ]
});
```
